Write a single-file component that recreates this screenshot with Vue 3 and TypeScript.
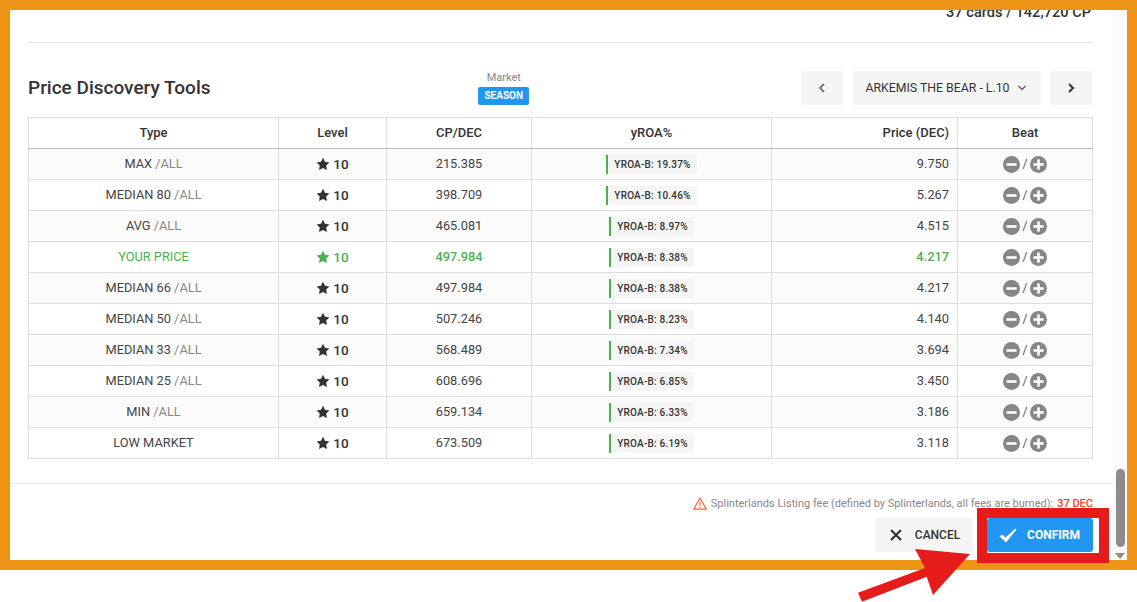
<script setup lang="ts">
interface Row {
  type: string
  all?: boolean
  cp: string
  roa: string
  price: string
  mine?: boolean
}

const rows: Row[] = [
  { type: 'MAX', all: true, cp: '215.385', roa: '19.37', price: '9.750' },
  { type: 'MEDIAN 80', all: true, cp: '398.709', roa: '10.46', price: '5.267' },
  { type: 'AVG', all: true, cp: '465.081', roa: '8.97', price: '4.515' },
  { type: 'YOUR PRICE', cp: '497.984', roa: '8.38', price: '4.217', mine: true },
  { type: 'MEDIAN 66', all: true, cp: '497.984', roa: '8.38', price: '4.217' },
  { type: 'MEDIAN 50', all: true, cp: '507.246', roa: '8.23', price: '4.140' },
  { type: 'MEDIAN 33', all: true, cp: '568.489', roa: '7.34', price: '3.694' },
  { type: 'MEDIAN 25', all: true, cp: '608.696', roa: '6.85', price: '3.450' },
  { type: 'MIN', all: true, cp: '659.134', roa: '6.33', price: '3.186' },
  { type: 'LOW MARKET', cp: '673.509', roa: '6.19', price: '3.118' },
]
</script>

<template>
  <div class="page">
    <div class="frame">
      <div class="dialog">
        <div class="body">
          <div class="summary">37 cards / 142,720 CP</div>
          <div class="tools-head">
            <h2 class="title">Price Discovery Tools</h2>
            <div class="market">
              <span class="market-label">Market</span>
              <span class="market-badge">SEASON</span>
            </div>
            <div class="picker">
              <button class="pick-btn">
                <svg width="10" height="12" viewBox="0 0 10 12"><path d="M7 2 L3 6 L7 10" fill="none" stroke="#777" stroke-width="1.8" /></svg>
              </button>
              <button class="pick-select">
                ARKEMIS THE BEAR - L.10
                <svg width="10" height="8" viewBox="0 0 10 8"><path d="M1.5 2 L5 5.5 L8.5 2" fill="none" stroke="#555" stroke-width="1.2" /></svg>
              </button>
              <button class="pick-btn">
                <svg width="10" height="12" viewBox="0 0 10 12"><path d="M3 2 L7 6 L3 10" fill="none" stroke="#333" stroke-width="2" /></svg>
              </button>
            </div>
          </div>
          <table class="grid">
            <colgroup>
              <col style="width: 250px" />
              <col style="width: 108px" />
              <col style="width: 145px" />
              <col style="width: 240px" />
              <col style="width: 186px" />
              <col style="width: 135px" />
            </colgroup>
            <thead>
              <tr>
                <th>Type</th>
                <th>Level</th>
                <th>CP/DEC</th>
                <th>yROA%</th>
                <th class="right">Price (DEC)</th>
                <th>Beat</th>
              </tr>
            </thead>
            <tbody>
              <tr v-for="row in rows" :key="row.type" :class="{ mine: row.mine }">
                <td class="txt">{{ row.type }}<span v-if="row.all" class="all"> /ALL</span></td>
                <td>
                  <span class="level">
                    <svg class="star" width="14" height="14" viewBox="0 0 24 24"><path d="M12 1.2 L15.4 8.2 L23 9.3 L17.5 14.7 L18.8 22.4 L12 18.8 L5.2 22.4 L6.5 14.7 L1 9.3 L8.6 8.2 Z" /></svg>
                    10
                  </span>
                </td>
                <td class="txt strong-mine">{{ row.cp }}</td>
                <td>
                  <span class="roa">YROA-B: {{ row.roa }}%</span>
                </td>
                <td class="txt right strong-mine">{{ row.price }}</td>
                <td>
                  <span class="beat">
                    <svg width="17" height="17" viewBox="0 0 16 16"><circle cx="8" cy="8" r="8" fill="#868686" /><rect x="3.2" y="6.8" width="9.6" height="2.4" fill="#fff" /></svg>
                    <span class="slash">/</span>
                    <svg width="17" height="17" viewBox="0 0 16 16"><circle cx="8" cy="8" r="8" fill="#868686" /><rect x="3.2" y="6.8" width="9.6" height="2.4" fill="#fff" /><rect x="6.8" y="3.2" width="2.4" height="9.6" fill="#fff" /></svg>
                  </span>
                </td>
              </tr>
            </tbody>
          </table>
        </div>
        <div class="foot">
          <p class="fee">
            <svg class="fee-icon" width="14" height="13" viewBox="0 0 14 13"><path d="M7 1 L13.3 12.2 H0.7 Z" fill="none" stroke="#f4623a" stroke-width="1.2" stroke-linejoin="round" /><path d="M7 4.6 V8.6 M7 9.6 V11" stroke="#f4623a" stroke-width="1.2" /></svg>
            <span>Splinterlands Listing fee (defined by Splinterlands, all fees are burned):</span>
            <span class="fee-value">37 DEC</span>
          </p>
          <div class="actions">
            <button class="btn cancel">
              <svg width="14" height="14" viewBox="0 0 14 14"><path d="M2 2 L12 12 M12 2 L2 12" stroke="#333" stroke-width="2.2" /></svg>
              CANCEL
            </button>
            <button class="btn confirm">
              <svg width="18" height="15" viewBox="0 0 18 15"><path d="M0.5 8.5 L3 6.5 L6.5 9.5 L16.5 0.5 L17.5 1.5 L7 14.5 Z" fill="#fff" /></svg>
              CONFIRM
            </button>
          </div>
        </div>
      </div>
      <div class="scrollbar">
        <div class="thumb"></div>
        <div class="down"></div>
      </div>
    </div>
    <div class="red-box"></div>
    <svg class="red-arrow" width="114" height="58" viewBox="0 0 114 58">
      <path d="M0 47.7 L67 23 L57 4 L112 9 L75 50 L68.7 31.7 L4 56.7 Z" fill="#e61c1c" />
    </svg>
  </div>
</template>

<style>
html,
body {
  margin: 0;
  background: #fff;
}
</style>

<style scoped>
.page {
  position: relative;
  width: 1137px;
  height: 602px;
  overflow: hidden;
  font-family: Roboto, "Liberation Sans", sans-serif;
  color: #333;
}

.frame {
  box-sizing: border-box;
  display: flex;
  height: 570px;
  border: 10px solid #ee9518;
  background: #fff;
}

.dialog {
  flex: 1;
  min-width: 0;
  display: flex;
  flex-direction: column;
  overflow: hidden;
}

.body {
  flex: 1;
  padding: 0 20px 0 18px;
}

.summary {
  height: 37px;
  margin-top: -5px;
  border-bottom: 1px solid #e0e0e0;
  text-align: right;
  font-size: 14.6px;
  font-weight: 500;
  line-height: 15px;
  padding-right: 2px;
  color: #333;
}

.tools-head {
  display: flex;
  align-items: center;
  justify-content: space-between;
  margin: 28px 1px 12px 0;
}

.title {
  margin: 0 0 2px;
  font-size: 19px;
  font-weight: 500;
  color: #333;
}

.market {
  display: flex;
  flex-direction: column;
  align-items: center;
  gap: 3px;
  margin-left: -4px;
}

.market-label {
  font-size: 11px;
  line-height: 13px;
  color: #888;
}

.market-badge {
  padding: 0 6px;
  font-size: 10px;
  font-weight: 700;
  line-height: 18px;
  color: #fff;
  background: #2196f3;
  border-radius: 2px;
}

.picker {
  display: flex;
  gap: 10px;
}

.pick-btn,
.pick-select {
  height: 34px;
  border: 0;
  border-radius: 3px;
  background: #f5f5f5;
  font-family: inherit;
  padding: 0;
  display: flex;
  align-items: center;
  justify-content: center;
}

.pick-btn {
  width: 42px;
}

.pick-select {
  width: 188px;
  margin-right: -1px;
  padding-right: 2px;
  gap: 7px;
  font-size: 12.3px;
  font-weight: 400;
  color: #333;
}

.grid {
  width: 1065px;
  table-layout: fixed;
  border-collapse: collapse;
  font-size: 12.8px;
  color: #444;
}

.grid th,
.grid td {
  height: 30px;
  padding: 0 8px;
  border: 1px solid #ddd;
  text-align: center;
  box-sizing: content-box;
}

.grid th,
.grid td.txt {
  height: 28px;
  padding-bottom: 2px;
}

.grid th {
  font-size: 13px;
  font-weight: 500;
  color: #333;
  border-bottom: 1px solid #bbb;
}

.grid .right {
  text-align: right;
}

.grid tbody tr:nth-child(odd) {
  background: #fbfbfb;
}

.all {
  color: #888;
}

.level {
  display: inline-flex;
  align-items: center;
  gap: 3px;
  font-size: 13.5px;
  font-weight: 500;
  color: #333;
  vertical-align: middle;
}

.star {
  fill: #333;
}

.roa {
  display: inline-block;
  padding: 0 6px;
  border-left: 2px solid #4caf50;
  background: #f5f5f5;
  font-size: 10px;
  font-weight: 500;
  line-height: 19px;
  letter-spacing: 0.2px;
  color: #333;
  vertical-align: middle;
}

.beat {
  display: inline-flex;
  align-items: center;
  gap: 2.5px;
  vertical-align: middle;
}

.slash {
  font-size: 12px;
  color: #555;
}

.mine td,
.mine .level {
  color: #4caf50;
}

.mine .star {
  fill: #4caf50;
}

.mine .strong-mine {
  font-weight: 500;
}

.foot {
  border-top: 1px solid #e8e8e8;
  padding: 13px 20px 8px 18px;
}

.fee {
  display: flex;
  align-items: center;
  justify-content: flex-end;
  gap: 4px;
  margin: 0 0 7px;
  font-size: 11px;
  line-height: 14px;
  color: #888;
}

.fee-icon {
  margin-top: -2px;
}

.fee-value {
  color: #f4431f;
  font-weight: 500;
}

.actions {
  display: flex;
  justify-content: flex-end;
  gap: 14px;
}

.btn {
  height: 34px;
  border: 0;
  border-radius: 3px;
  display: flex;
  align-items: center;
  justify-content: center;
  font-family: inherit;
  font-size: 12px;
  font-weight: 500;
  padding: 0;
}

.cancel {
  width: 98px;
  gap: 12px;
  padding-left: 1px;
  background: #f5f5f5;
  color: #333;
}

.confirm {
  width: 106px;
  gap: 10px;
  padding-right: 1px;
  background: #2196f3;
  color: #fff;
  font-weight: 700;
}

.scrollbar {
  width: 14px;
  flex-shrink: 0;
  display: flex;
  flex-direction: column;
  align-items: center;
  justify-content: flex-end;
  background: #fafafa;
}

.thumb {
  width: 9px;
  height: 78px;
  border-radius: 5px;
  background: #8c8c8c;
  margin-bottom: 6px;
}

.down {
  width: 0;
  height: 0;
  margin-bottom: 1px;
  border-left: 5px solid transparent;
  border-right: 5px solid transparent;
  border-top: 6px solid #8c8c8c;
}

/* annotation drawn over the screenshot */
.red-box {
  position: absolute;
  left: 977px;
  top: 508px;
  width: 132px;
  height: 55px;
  box-sizing: border-box;
  border: 10px solid #e61c1c;
}

.red-arrow {
  position: absolute;
  left: 858px;
  top: 545px;
}
</style>
